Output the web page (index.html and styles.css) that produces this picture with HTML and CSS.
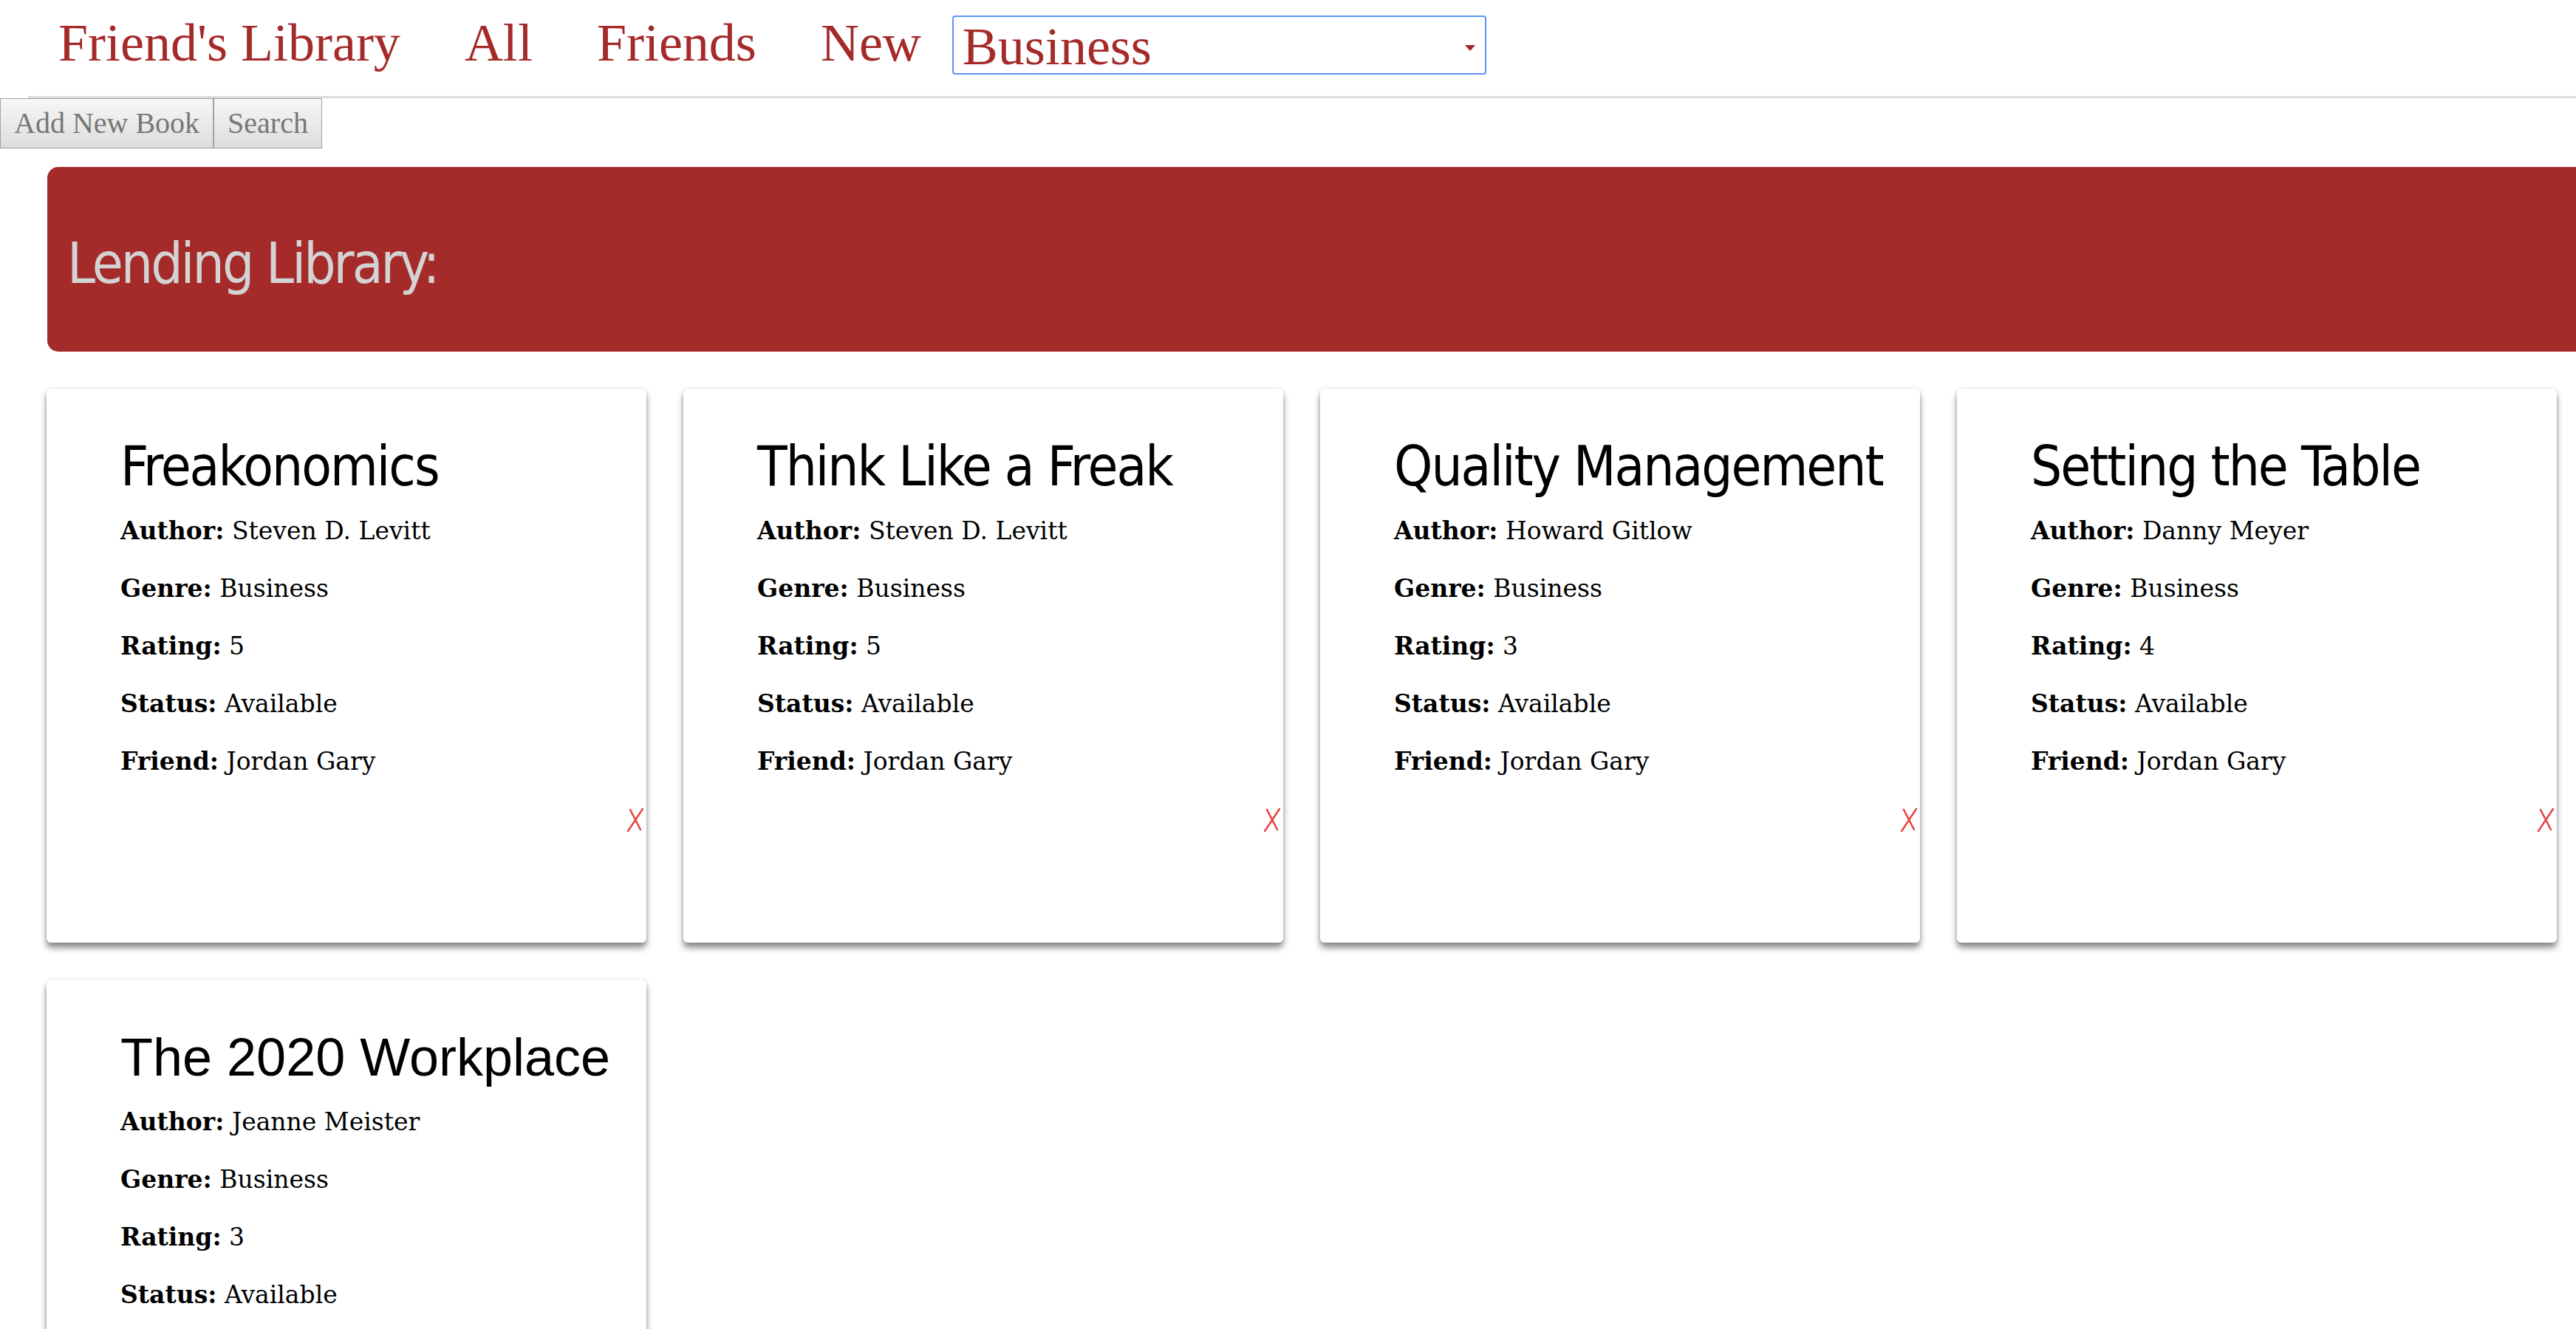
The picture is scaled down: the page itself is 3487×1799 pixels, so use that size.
FILE: index.html
```html
<!DOCTYPE html>
<html lang="en">
<head>
  <meta charset="UTF-8">
  <meta name="viewport" content="width=device-width, initial-scale=1.0">
  <title>Friend's Library</title>
  <link rel="stylesheet" href="styles.css">
</head>
<body>
  <header class="top-nav">
    <a href="#" class="nav-link">Friend's Library</a>
    <a href="#" class="nav-link">All</a>
    <a href="#" class="nav-link">Friends</a>
    <a href="#" class="nav-link">New</a>
    <div class="genre-select">
      <select>
        <option>Business</option>
        <option>Fiction</option>
        <option>History</option>
      </select>
      <svg class="select-arrow" width="14" height="8" viewBox="0 0 14 8"><path d="M0 0H14L7 8Z"/></svg>
    </div>
  </header>

  <div class="toolbar">
    <button class="tool-btn">Add New Book</button>
    <button class="tool-btn">Search</button>
  </div>

  <div class="banner">
    <h1>Lending Library:</h1>
  </div>

  <div class="book-grid">
    <div class="book-card">
      <h2 class="book-title">Freakonomics</h2>
      <p><b>Author:</b> Steven D. Levitt</p>
      <p><b>Genre:</b> Business</p>
      <p><b>Rating:</b> 5</p>
      <p><b>Status:</b> Available</p>
      <p><b>Friend:</b> Jordan Gary</p>
      <div class="delete-row">
        <button class="delete-btn"><svg width="22" height="32" viewBox="0 0 22 32"><path d="M4 2L18 29M21 1L1 31"/></svg></button>
      </div>
    </div>
    <div class="book-card">
      <h2 class="book-title">Think Like a Freak</h2>
      <p><b>Author:</b> Steven D. Levitt</p>
      <p><b>Genre:</b> Business</p>
      <p><b>Rating:</b> 5</p>
      <p><b>Status:</b> Available</p>
      <p><b>Friend:</b> Jordan Gary</p>
      <div class="delete-row">
        <button class="delete-btn"><svg width="22" height="32" viewBox="0 0 22 32"><path d="M4 2L18 29M21 1L1 31"/></svg></button>
      </div>
    </div>
    <div class="book-card">
      <h2 class="book-title">Quality Management</h2>
      <p><b>Author:</b> Howard Gitlow</p>
      <p><b>Genre:</b> Business</p>
      <p><b>Rating:</b> 3</p>
      <p><b>Status:</b> Available</p>
      <p><b>Friend:</b> Jordan Gary</p>
      <div class="delete-row">
        <button class="delete-btn"><svg width="22" height="32" viewBox="0 0 22 32"><path d="M4 2L18 29M21 1L1 31"/></svg></button>
      </div>
    </div>
    <div class="book-card">
      <h2 class="book-title">Setting the Table</h2>
      <p><b>Author:</b> Danny Meyer</p>
      <p><b>Genre:</b> Business</p>
      <p><b>Rating:</b> 4</p>
      <p><b>Status:</b> Available</p>
      <p><b>Friend:</b> Jordan Gary</p>
      <div class="delete-row">
        <button class="delete-btn"><svg width="22" height="32" viewBox="0 0 22 32"><path d="M4 2L18 29M21 1L1 31"/></svg></button>
      </div>
    </div>
    <div class="book-card">
      <h2 class="book-title book-title-plain">The 2020 Workplace</h2>
      <p><b>Author:</b> Jeanne Meister</p>
      <p><b>Genre:</b> Business</p>
      <p><b>Rating:</b> 3</p>
      <p><b>Status:</b> Available</p>
      <p><b>Friend:</b> Jordan Gary</p>
      <div class="delete-row">
        <button class="delete-btn"><svg width="22" height="32" viewBox="0 0 22 32"><path d="M4 2L18 29M21 1L1 31"/></svg></button>
      </div>
    </div>
  </div>
</body>
</html>
```

FILE: styles.css
```css
body, html {
  margin: 0;
  padding: 0;
}
body {
  overflow-x: hidden;
  background: #fff;
  font-family: "Liberation Serif", serif;
}
a {
  text-decoration: none;
}

/* top navigation */
.top-nav {
  display: flex;
  align-items: flex-start;
  height: 133px;
  box-sizing: border-box;
  margin-left: 38px;
  padding: 18px 0 0 41px;
  border-bottom: 3px solid #dcdcdc;
}
.nav-link {
  margin-right: 87px;
  font-size: 72px;
  line-height: 80px;
  color: #a52a2a;
}
.nav-link:nth-child(4) {
  margin-right: 42px;
}
.genre-select {
  position: relative;
  margin-top: 3px;
}
.genre-select select {
  display: block;
  width: 723px;
  height: 80px;
  padding: 0 0 0 12px;
  border: 2px solid #5b95f7;
  border-radius: 4px;
  background: #fff;
  font-family: "Liberation Serif", serif;
  font-size: 72px;
  color: #a52a2a;
  appearance: none;
  -webkit-appearance: none;
  outline: none;
}
.select-arrow {
  position: absolute;
  right: 15px;
  top: 40px;
  fill: #9b2727;
  pointer-events: none;
}

/* buttons under the nav */
.toolbar {
  display: flex;
}
.tool-btn {
  margin: 0;
  padding: 10px 18px;
  border: 1px solid #a3a3a3;
  border-radius: 0;
  background: linear-gradient(#f7f7f7, #dddddd);
  font-family: "Liberation Serif", serif;
  font-size: 40px;
  line-height: 46px;
  color: #777;
  cursor: pointer;
}

/* red banner */
.banner {
  display: flex;
  align-items: center;
  height: 250px;
  margin: 25px -40px 0 64px;
  padding: 10px 0 0 27px;
  box-sizing: border-box;
  border-radius: 15px;
  background-color: #a52a2a;
}
.banner h1 {
  margin: 0;
  font-family: "DejaVu Sans Condensed", "DejaVu Sans", sans-serif;
  font-stretch: condensed;
  font-size: 76px;
  font-weight: normal;
  letter-spacing: -3px;
  color: #d3d3d3;
}

/* book cards */
.book-grid {
  display: grid;
  grid-template-columns: repeat(4, 812px);
  gap: 50px;
  margin: 50px 0 0 63px;
  padding-bottom: 60px;
}
.book-card {
  height: 750px;
  box-sizing: border-box;
  padding: 66px 4px 0 100px;
  border-radius: 6px;
  background: #fff;
  box-shadow: 0 7px 9px rgba(0, 0, 0, 0.45), 0 0 4px rgba(0, 0, 0, 0.12);
}
.book-title {
  margin: 0 0 28px;
  font-family: "DejaVu Sans Condensed", "DejaVu Sans", sans-serif;
  font-stretch: condensed;
  font-size: 74px;
  line-height: 78px;
  font-weight: normal;
  letter-spacing: -2px;
  color: #000;
  white-space: nowrap;
}
.book-title-plain {
  font-family: "Liberation Sans", sans-serif;
  font-stretch: normal;
  font-size: 72px;
  letter-spacing: 0;
}
.book-card p {
  margin: 0 0 36px;
  font-family: "DejaVu Serif", serif;
  font-size: 33px;
  line-height: 42px;
  color: #000;
}
.delete-row {
  display: flex;
  justify-content: flex-end;
  padding-top: 6px;
}
.delete-btn {
  padding: 0;
  border: none;
  background: none;
  cursor: pointer;
}
.delete-btn svg {
  display: block;
  fill: none;
  stroke: #e84444;
  stroke-width: 2.6;
  stroke-linecap: round;
}
```
